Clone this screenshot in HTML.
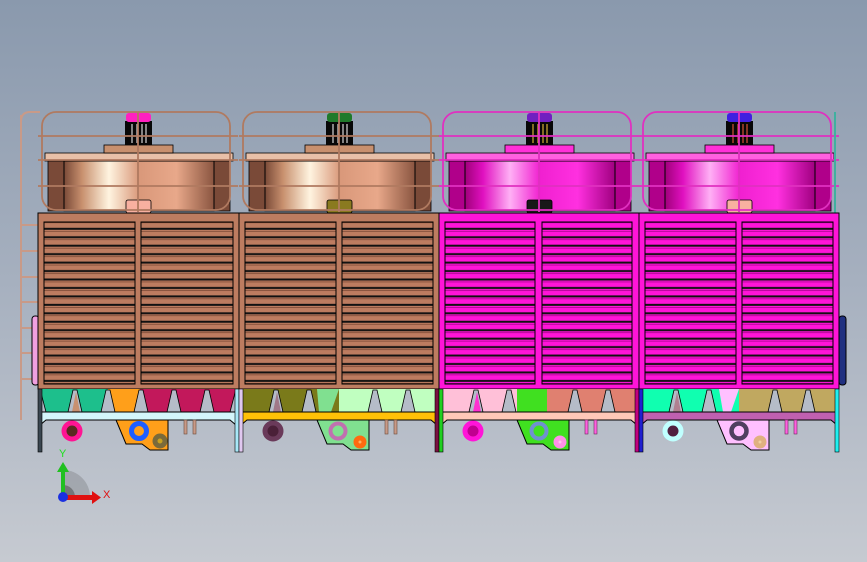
<!DOCTYPE html>
<html><head><meta charset="utf-8"><style>
html,body{margin:0;padding:0;width:867px;height:562px;overflow:hidden}
svg{display:block}
</style></head><body>
<svg width="867" height="562" viewBox="0 0 867 562" xmlns="http://www.w3.org/2000/svg">
<defs>
<linearGradient id="bg" x1="0" y1="0" x2="0" y2="1">
<stop offset="0" stop-color="#8a99ad"/><stop offset="0.5" stop-color="#a6b0bf"/><stop offset="1" stop-color="#c6cad1"/>
</linearGradient>
<linearGradient id="cu" x1="0" y1="0" x2="1" y2="0">
<stop offset="0" stop-color="#7a4a38"/><stop offset="0.12" stop-color="#c8906e"/><stop offset="0.3" stop-color="#fff4e0"/><stop offset="0.5" stop-color="#d9987a"/><stop offset="0.75" stop-color="#e8a88a"/><stop offset="1" stop-color="#8a5540"/>
</linearGradient>
<linearGradient id="mg" x1="0" y1="0" x2="1" y2="0">
<stop offset="0" stop-color="#a0007a"/><stop offset="0.12" stop-color="#e010c0"/><stop offset="0.3" stop-color="#ffb0f5"/><stop offset="0.5" stop-color="#f020d0"/><stop offset="0.75" stop-color="#ff30e0"/><stop offset="1" stop-color="#a00080"/>
</linearGradient>
<pattern id="lvB" x="0" y="222" width="10" height="8.45" patternUnits="userSpaceOnUse">
<rect width="10" height="8.45" fill="#bd7c60"/><rect y="5.8" width="10" height="2" fill="#111"/><rect y="0.5" width="10" height="0.6" fill="#6a3a28"/>
</pattern>
<pattern id="lvM" x="0" y="222" width="10" height="8.45" patternUnits="userSpaceOnUse">
<rect width="10" height="8.45" fill="#ff14d8"/><rect y="5.8" width="10" height="2" fill="#111"/><rect y="0.5" width="10" height="0.6" fill="#90007a"/>
</pattern>
</defs>
<rect width="867" height="562" fill="url(#bg)"/>

<g stroke="#c89a88" stroke-width="2">
<line x1="21" y1="115" x2="21" y2="420"/>
<line x1="21" y1="225" x2="38" y2="225"/><line x1="21" y1="251" x2="38" y2="251"/><line x1="21" y1="277" x2="38" y2="277"/><line x1="21" y1="302" x2="38" y2="302"/><line x1="21" y1="328" x2="38" y2="328"/><line x1="21" y1="353" x2="38" y2="353"/><line x1="21" y1="379" x2="38" y2="379"/>
<path d="M21 122 Q21 112 30 112 L40 112" fill="none"/>
</g>
<rect x="32" y="316" width="7" height="69" rx="3" fill="#f0a0e0" stroke="#000"/>
<rect x="839" y="316" width="7" height="69" rx="3" fill="#203080" stroke="#000"/>

<!-- M1 -->
<g transform="translate(38,0)">
<rect x="7" y="153" width="188" height="8" fill="#e8c0a8" stroke="#000" stroke-width="0.8"/>
<rect x="10" y="161" width="182" height="50" fill="#7a4a38" stroke="#000" stroke-width="0.8"/>
<rect x="26" y="161" width="150" height="50" fill="url(#cu)" stroke="#000" stroke-width="1"/>
<rect x="66" y="145" width="69" height="8" fill="#c8906e" stroke="#000" stroke-width="0.8"/>
<rect x="87" y="121" width="27" height="24" fill="#080808"/>
<g stroke="#fff" stroke-width="1"><line x1="94" y1="124" x2="94" y2="143"/><line x1="99" y1="124" x2="99" y2="143"/><line x1="104" y1="124" x2="104" y2="143"/><line x1="108" y1="124" x2="108" y2="143"/></g>
<rect x="88" y="113" width="25" height="9" rx="3" fill="#ff20c0"/>
<rect x="88" y="200" width="25" height="13" rx="2" fill="#f8b0a0" stroke="#000" stroke-width="0.8"/>
<g fill="none" stroke="#b07a60" stroke-width="1.8">
<rect x="4" y="112" width="188" height="98" rx="14"/>
<line x1="0" y1="136" x2="200" y2="136"/><line x1="0" y1="160" x2="200" y2="160"/><line x1="0" y1="186" x2="200" y2="186"/>
<line x1="100" y1="112" x2="100" y2="212"/>
</g>
<rect x="0" y="213" width="202" height="176" fill="#bd7c60" stroke="#000" stroke-width="1"/>
<rect x="6" y="222" width="91" height="162" fill="url(#lvB)" stroke="#000"/>
<rect x="103" y="222" width="92" height="162" fill="url(#lvB)" stroke="#000"/>
<rect x="2" y="389" width="68" height="23" fill="#1dbf8c"/><rect x="70" y="389" width="32" height="23" fill="#ff9f1a"/><rect x="102" y="389" width="96" height="23" fill="#c2185b"/>
<g fill="#b5bcc8" stroke="#000" stroke-width="0.8"><path d="M2 389 L8 412 L2 412Z"/><path d="M30 412 L35 390 L39 390 L44 412Z"/><path d="M63 412 L68 390 L72 390 L77 412Z"/><path d="M96 412 L101 390 L105 390 L110 412Z"/><path d="M129 412 L134 390 L138 390 L143 412Z"/><path d="M162 412 L167 390 L171 390 L176 412Z"/><path d="M198 389 L192 412 L198 412Z"/></g>
<path d="M34 412 L38 392 L42 412Z" fill="#c89070"/>
<path d="M2 412 L198 412 L198 425 L192 420 L8 420 L2 425Z" fill="#d4f6fb" stroke="#000" stroke-width="1"/>
<path d="M78 420 L130 420 L130 450 L112 450 L104 444 L88 444 Z" fill="#ff9f1a" stroke="#000"/>
<circle cx="34" cy="431" r="8" fill="#5a2a20" stroke="#ff1493" stroke-width="5"/>
<circle cx="101" cy="431" r="7.5" fill="#ff9f1a" stroke="#1e5eff" stroke-width="5"/>
<circle cx="122" cy="441" r="5" fill="#c8a020" stroke="#7a6a3a" stroke-width="5"/>
<g fill="#c89a88" stroke="#6a4a3a" stroke-width="0.6"><rect x="146" y="420" width="3" height="14"/><rect x="155" y="420" width="3" height="14"/></g>
<rect x="0" y="389" width="4" height="63" fill="#3a4650" stroke="#000" stroke-width="0.6"/>
</g>

<!-- M2 -->
<g transform="translate(239,0)">
<rect x="7" y="153" width="188" height="8" fill="#e8c0a8" stroke="#000" stroke-width="0.8"/>
<rect x="10" y="161" width="182" height="50" fill="#7a4a38" stroke="#000" stroke-width="0.8"/>
<rect x="26" y="161" width="150" height="50" fill="url(#cu)" stroke="#000" stroke-width="1"/>
<rect x="66" y="145" width="69" height="8" fill="#c8906e" stroke="#000" stroke-width="0.8"/>
<rect x="87" y="121" width="27" height="24" fill="#080808"/>
<g stroke="#fff" stroke-width="1"><line x1="94" y1="124" x2="94" y2="143"/><line x1="99" y1="124" x2="99" y2="143"/><line x1="104" y1="124" x2="104" y2="143"/><line x1="108" y1="124" x2="108" y2="143"/></g>
<rect x="88" y="113" width="25" height="9" rx="3" fill="#1f7a2a"/>
<rect x="88" y="200" width="25" height="13" rx="2" fill="#8a7a20" stroke="#000" stroke-width="0.8"/>
<g fill="none" stroke="#b07a60" stroke-width="1.8">
<rect x="4" y="112" width="188" height="98" rx="14"/>
<line x1="0" y1="136" x2="200" y2="136"/><line x1="0" y1="160" x2="200" y2="160"/><line x1="0" y1="186" x2="200" y2="186"/>
<line x1="100" y1="112" x2="100" y2="212"/>
</g>
<rect x="0" y="213" width="201" height="176" fill="#bd7c60" stroke="#000" stroke-width="1"/>
<rect x="6" y="222" width="91" height="162" fill="url(#lvB)" stroke="#000"/>
<rect x="103" y="222" width="91" height="162" fill="url(#lvB)" stroke="#000"/>
<rect x="4" y="389" width="96" height="23" fill="#7a7a1a"/><rect x="100" y="389" width="96" height="23" fill="#c0ffc0"/>
<g fill="#b5bcc8" stroke="#000" stroke-width="0.8"><path d="M30 412 L35 390 L39 390 L44 412Z"/><path d="M63 412 L68 390 L72 390 L77 412Z"/><path d="M129 412 L134 390 L138 390 L143 412Z"/><path d="M162 412 L167 390 L171 390 L176 412Z"/></g>
<path d="M78 389 L100 389 L92 412 L80 412Z" fill="#80e090"/>
<path d="M34 412 L38 392 L42 412Z" fill="#a07888"/>
<path d="M2 412 L198 412 L198 425 L192 420 L8 420 L2 425Z" fill="#ffc107" stroke="#000" stroke-width="1"/>
<path d="M78 420 L130 420 L130 450 L112 450 L104 444 L88 444 Z" fill="#80e090" stroke="#000"/>
<circle cx="34" cy="431" r="8" fill="#4a2038" stroke="#6a3a5a" stroke-width="5"/>
<circle cx="99" cy="431" r="7.5" fill="#80e090" stroke="#c070b0" stroke-width="4"/>
<circle cx="121" cy="442" r="4" fill="#ffb060" stroke="#ff6a10" stroke-width="5"/>
<g fill="#c89a88" stroke="#6a4a3a" stroke-width="0.6"><rect x="146" y="420" width="3" height="14"/><rect x="155" y="420" width="3" height="14"/></g>
<rect x="-4" y="389" width="4" height="63" fill="#a8e8f8" stroke="#000" stroke-width="0.6"/>
<rect x="0" y="389" width="4" height="63" fill="#e0c8f0" stroke="#000" stroke-width="0.6"/>
</g>

<!-- M3 -->
<g transform="translate(439,0)">
<rect x="7" y="153" width="188" height="8" fill="#ff60e0" stroke="#000" stroke-width="0.8"/>
<rect x="10" y="161" width="182" height="50" fill="#b0008a" stroke="#000" stroke-width="0.8"/>
<rect x="26" y="161" width="150" height="50" fill="url(#mg)" stroke="#000" stroke-width="1"/>
<rect x="66" y="145" width="69" height="8" fill="#ff30d8" stroke="#000" stroke-width="0.8"/>
<rect x="87" y="121" width="27" height="24" fill="#080808"/>
<g stroke="#ffd040" stroke-width="1"><line x1="94" y1="124" x2="94" y2="143"/><line x1="99" y1="124" x2="99" y2="143"/><line x1="104" y1="124" x2="104" y2="143"/><line x1="108" y1="124" x2="108" y2="143"/></g>
<rect x="88" y="113" width="25" height="9" rx="3" fill="#7020c0"/>
<rect x="88" y="200" width="25" height="13" rx="2" fill="#181818" stroke="#000" stroke-width="0.8"/>
<g fill="none" stroke="#e030c0" stroke-width="1.8">
<rect x="4" y="112" width="188" height="98" rx="14"/>
<line x1="0" y1="136" x2="200" y2="136"/><line x1="0" y1="160" x2="200" y2="160"/><line x1="0" y1="186" x2="200" y2="186"/>
<line x1="100" y1="112" x2="100" y2="212"/>
</g>
<rect x="0" y="213" width="200" height="176" fill="#ff14d8" stroke="#000" stroke-width="1"/>
<rect x="6" y="222" width="90" height="162" fill="url(#lvM)" stroke="#000"/>
<rect x="103" y="222" width="90" height="162" fill="url(#lvM)" stroke="#000"/>
<rect x="4" y="389" width="74" height="23" fill="#ffc0d8"/><rect x="78" y="389" width="30" height="23" fill="#40e020"/><rect x="108" y="389" width="90" height="23" fill="#e08070"/>
<g fill="#b5bcc8" stroke="#000" stroke-width="0.8"><path d="M30 412 L35 390 L39 390 L44 412Z"/><path d="M63 412 L68 390 L72 390 L77 412Z"/><path d="M129 412 L134 390 L138 390 L143 412Z"/><path d="M162 412 L167 390 L171 390 L176 412Z"/></g>
<path d="M34 412 L38 392 L42 412Z" fill="#ff30d0"/>
<path d="M2 412 L198 412 L198 425 L192 420 L8 420 L2 425Z" fill="#ffc8b8" stroke="#000" stroke-width="1"/>
<path d="M78 420 L130 420 L130 450 L112 450 L104 444 L88 444 Z" fill="#40e020" stroke="#000"/>
<circle cx="34" cy="431" r="8" fill="#c00090" stroke="#ff14d8" stroke-width="5"/>
<circle cx="100" cy="431" r="7.5" fill="#40e020" stroke="#7090d0" stroke-width="4"/>
<circle cx="121" cy="442" r="4" fill="#ffc0f0" stroke="#ff90e8" stroke-width="5"/>
<g fill="#ff60e0" stroke="#6a2a5a" stroke-width="0.6"><rect x="146" y="420" width="3" height="14"/><rect x="155" y="420" width="3" height="14"/></g>
<rect x="-4" y="389" width="4" height="63" fill="#7a1040" stroke="#000" stroke-width="0.6"/>
<rect x="0" y="389" width="4" height="63" fill="#20d020" stroke="#000" stroke-width="0.6"/>
</g>

<!-- M4 -->
<g transform="translate(639,0)">
<rect x="7" y="153" width="188" height="8" fill="#ff60e0" stroke="#000" stroke-width="0.8"/>
<rect x="10" y="161" width="182" height="50" fill="#b0008a" stroke="#000" stroke-width="0.8"/>
<rect x="26" y="161" width="150" height="50" fill="url(#mg)" stroke="#000" stroke-width="1"/>
<rect x="66" y="145" width="69" height="8" fill="#ff30d8" stroke="#000" stroke-width="0.8"/>
<rect x="87" y="121" width="27" height="24" fill="#080808"/>
<g stroke="#ff6040" stroke-width="1"><line x1="94" y1="124" x2="94" y2="143"/><line x1="99" y1="124" x2="99" y2="143"/><line x1="104" y1="124" x2="104" y2="143"/><line x1="108" y1="124" x2="108" y2="143"/></g>
<rect x="88" y="113" width="25" height="9" rx="3" fill="#4020e0"/>
<rect x="88" y="200" width="25" height="13" rx="2" fill="#f8b0a0" stroke="#000" stroke-width="0.8"/>
<g fill="none" stroke="#e030c0" stroke-width="1.8">
<rect x="4" y="112" width="188" height="98" rx="14"/>
<line x1="0" y1="136" x2="200" y2="136"/><line x1="0" y1="160" x2="200" y2="160"/><line x1="0" y1="186" x2="200" y2="186"/>
<line x1="100" y1="112" x2="100" y2="212"/>
</g>
<line x1="196" y1="112" x2="196" y2="330" stroke="#40b0a0" stroke-width="2"/>
<rect x="0" y="213" width="200" height="176" fill="#ff14d8" stroke="#000" stroke-width="1"/>
<rect x="6" y="222" width="91" height="162" fill="url(#lvM)" stroke="#000"/>
<rect x="103" y="222" width="91" height="162" fill="url(#lvM)" stroke="#000"/>
<rect x="4" y="389" width="96" height="23" fill="#10ffb0"/><rect x="100" y="389" width="96" height="23" fill="#c0a860"/>
<g fill="#b5bcc8" stroke="#000" stroke-width="0.8"><path d="M30 412 L35 390 L39 390 L44 412Z"/><path d="M63 412 L68 390 L72 390 L77 412Z"/><path d="M129 412 L134 390 L138 390 L143 412Z"/><path d="M162 412 L167 390 L171 390 L176 412Z"/></g>
<path d="M80 389 L100 389 L92 412 L84 412Z" fill="#ffc0ff"/>
<path d="M34 412 L38 392 L42 412Z" fill="#b08090"/>
<path d="M2 412 L198 412 L198 425 L192 420 L8 420 L2 425Z" fill="#c060b0" stroke="#000" stroke-width="1"/>
<path d="M78 420 L130 420 L130 450 L112 450 L104 444 L88 444 Z" fill="#ffc0ff" stroke="#000"/>
<circle cx="34" cy="431" r="8" fill="#502040" stroke="#c0ffff" stroke-width="5"/>
<circle cx="100" cy="431" r="7.5" fill="#ffc0ff" stroke="#504060" stroke-width="4.5"/>
<circle cx="121" cy="442" r="4" fill="#f0d0a0" stroke="#e0b080" stroke-width="5"/>
<g fill="#ff60e0" stroke="#6a2a5a" stroke-width="0.6"><rect x="146" y="420" width="3" height="14"/><rect x="155" y="420" width="3" height="14"/></g>
<rect x="-4" y="389" width="4" height="63" fill="#c00080" stroke="#000" stroke-width="0.6"/>
<rect x="0" y="389" width="4" height="63" fill="#2020d0" stroke="#000" stroke-width="0.6"/>
<rect x="196" y="389" width="4" height="63" fill="#20f0f0" stroke="#000" stroke-width="0.6"/>
</g>

<g>
<path d="M63 497 L63 470 A27 27 0 0 1 90 497 Z" fill="#8c8f95" opacity="0.55"/>
<path d="M63 497 L63 485 A12 12 0 0 1 75 497 Z" fill="#555" opacity="0.6"/>
<rect x="61" y="470" width="4" height="26" fill="#20c020"/>
<path d="M57 472 L63 462 L69 472Z" fill="#20c020"/>
<rect x="63" y="495" width="30" height="5" fill="#e01010"/>
<path d="M92 491 L101 497.5 L92 504Z" fill="#e01010"/>
<circle cx="63" cy="497" r="5" fill="#1a30e0"/>
<text x="59" y="457" font-family="Liberation Sans, sans-serif" font-size="11" fill="#20e020">Y</text>
<text x="103" y="498" font-family="Liberation Sans, sans-serif" font-size="11" fill="#e01010">X</text>
</g>
</svg>
</body></html>
